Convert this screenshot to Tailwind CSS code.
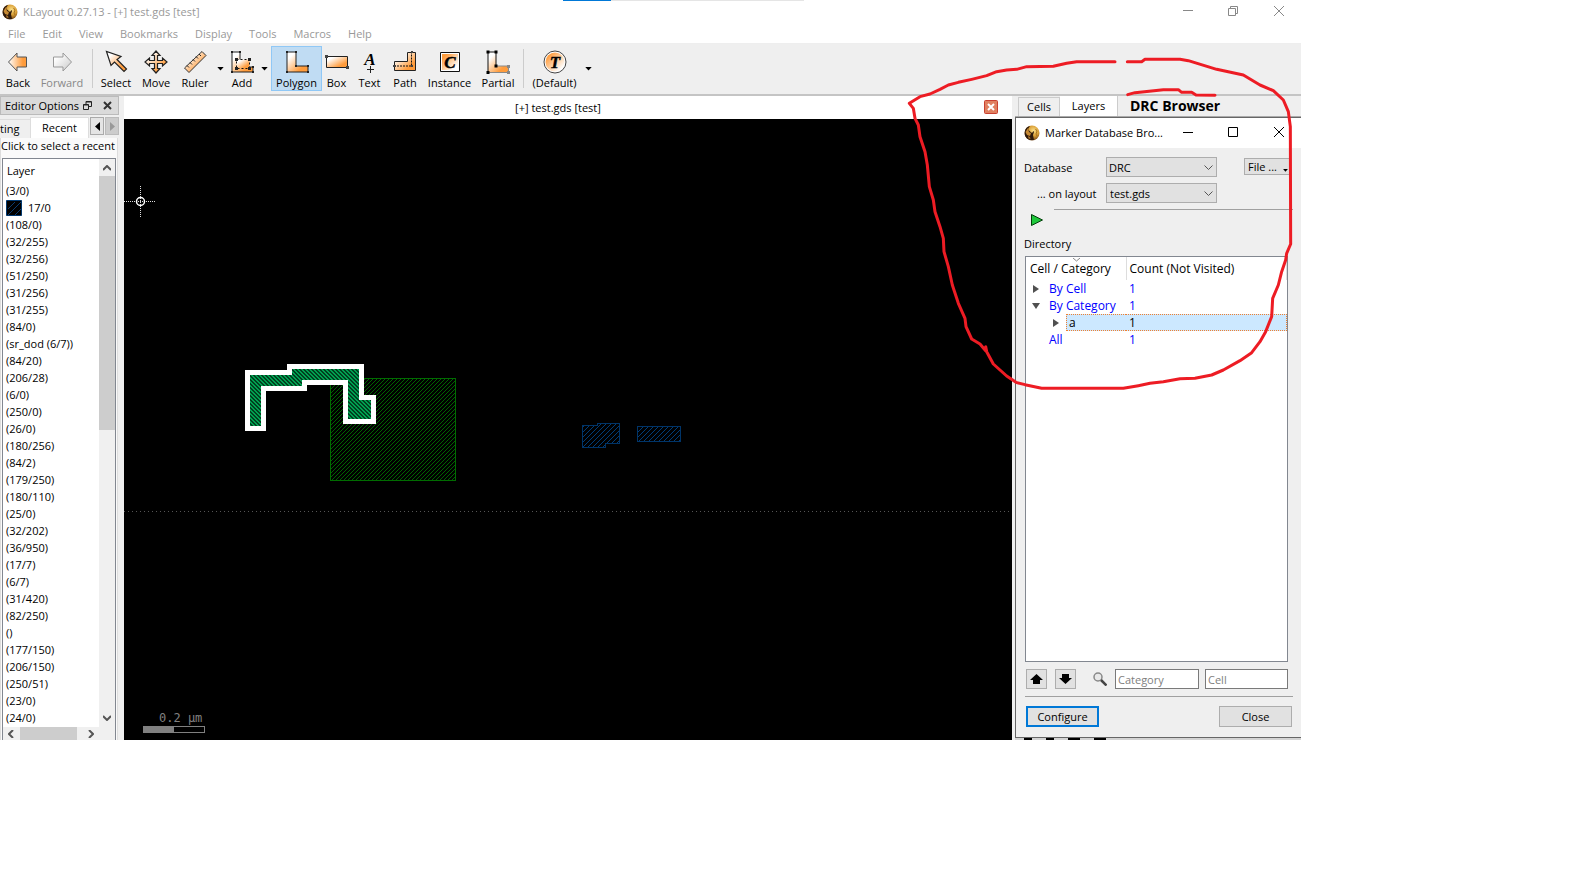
<!DOCTYPE html>
<html lang="en">
<head>
<meta charset="utf-8">
<title>KLayout 0.27.13 - [+] test.gds [test]</title>
<script src="https://cdn.jsdelivr.net/npm/@tailwindcss/browser@4"></script>
</head>
<body class="h-screen overflow-hidden bg-white pr-[273px] pb-[156px] font-['Open_Sans','Noto_Sans',sans-serif] text-[11px] leading-4 text-black">
<svg class="absolute size-0" aria-hidden="true">
  <defs>
    <linearGradient id="or" x1="0" y1="0" x2="1" y2="1"><stop offset="0.2" stop-color="#fff"/><stop offset="0.75" stop-color="#ff9c3c"/></linearGradient>
    <linearGradient id="ro" x1="1" y1="1" x2="0" y2="0"><stop offset="0.15" stop-color="#fff"/><stop offset="0.85" stop-color="#ff9c3c"/></linearGradient>
    <linearGradient id="oh"><stop offset="0" stop-color="#fff"/><stop offset="0.8" stop-color="#ff9c3c"/></linearGradient>
    <linearGradient id="gr" x1="0" y1="0" x2="1" y2="1"><stop offset="0.2" stop-color="#fff"/><stop offset="1" stop-color="#c8c8c8"/></linearGradient>
    <radialGradient id="gold" cx="0.6" cy="0.35" r="0.7"><stop offset="0" stop-color="#fbe08a"/><stop offset="0.5" stop-color="#d99e35"/><stop offset="1" stop-color="#5c3210"/></radialGradient>
    <symbol id="logo" viewBox="0 0 16 16">
      <circle cx="8" cy="8" r="7.5" fill="url(#gold)"/>
      <path d="M.800 7C1 4 3 1.500 6 1L4 4l1.500 2L8 8l1.500-2 .5 1-1 3 1 5C5 15.500 1.500 13 .800 9.500z" fill="#2e1a0c"/>
      <path d="M1.500 7l2.500-4 1 4 2 1-1 3-3-1z" fill="#c78a34"/>
      <path d="M4 11l2 1 .5 2-2-.5z" fill="#a87028"/>
      <path d="M11.500 4l1.500 2-1 3 1 2" fill="none" stroke="#a8741f"/>
    </symbol>
    <symbol id="drop" viewBox="0 0 8 5"><path d="M0 0h8L4 4.500z"/></symbol>
  </defs>
</svg>

<div class="relative flex h-full flex-col overflow-hidden">
  <div class="absolute left-[563px] top-0 flex h-px w-[241px] bg-[#e5e5e5]"><span class="w-12 bg-[#0078d7]"></span></div>

  <header class="flex h-6 shrink-0 items-center pl-[2px] pr-[17px] text-[#999]">
    <svg class="mr-[5px] size-4"><use href="#logo"/></svg>
    <h1 class="flex-1">KLayout 0.27.13 - [+] test.gds [test]</h1>
    <div class="flex gap-[33px]">
      <button class="size-3" aria-label="Minimize"><svg class="size-3" viewBox="0 0 12 12" stroke="#888"><path d="M1 4.500h10"/></svg></button>
      <button class="size-3" aria-label="Restore"><svg class="size-3" viewBox="0 0 12 12" fill="none" stroke="#888"><path d="M1.500 2.500h7v7h-7zM3.500 2.500v-2h7v7h-2"/></svg></button>
      <button class="size-3" aria-label="Close"><svg class="size-3" viewBox="0 0 12 12" stroke="#888"><path d="M2 0l10 10M12 0L2 10"/></svg></button>
    </div>
  </header>

  <nav class="flex h-5 shrink-0 items-center gap-px border-b border-[#eee] text-[#999]">
    <button class="px-2">File</button><button class="px-2">Edit</button><button class="px-2">View</button><button class="px-2">Bookmarks</button><button class="px-2">Display</button><button class="px-2">Tools</button><button class="px-2">Macros</button><button class="px-2">Help</button>
  </nav>

  <div class="flex h-[52px] shrink-0 border-b-2 border-[#c4c4c4] bg-[#efefef] pb-[3px] pt-[2px]" role="toolbar">
    <button class="flex w-9 flex-col items-center justify-end gap-px"><svg class="size-6" viewBox="0 0 24 24"><path d="M2.500 12L11 3v4h9.500v10H11v4z" fill="url(#oh)" stroke="#555"/></svg><span>Back</span></button>
    <button class="flex w-[52px] flex-col items-center justify-end gap-px text-[#888]"><svg class="size-6" viewBox="0 0 24 24"><path d="M21.500 12L13 3v4H3.500v10H13v4z" fill="url(#gr)" stroke="#999"/></svg><span>Forward</span></button>
    <span class="mx-1 my-[3px] w-px bg-[#ccc]"></span>
    <button class="flex w-[38px] flex-col items-center justify-end gap-px"><svg class="size-6" viewBox="0 0 24 24"><path d="M2.500 1.500l4.500 14 3.500-3.500 9.500 9.500 2.500-2.500-9.500-9.500 4-3z" fill="url(#or)" stroke="#222" stroke-width="1.200"/></svg><span>Select</span></button>
    <button class="flex w-[42px] flex-col items-center justify-end gap-px"><svg class="size-6" viewBox="0 0 24 24"><path d="M12 1l4 4.500h-2.500v5h5V8l4.500 4-4.500 4v-2.500h-5v5H16L12 23l-4-4.500h2.500v-5h-5V16L1 12l4.500-4v2.500h5v-5H8z" fill="url(#or)" stroke="#222" stroke-width="1.200"/></svg><span>Move</span></button>
    <button class="flex w-[36px] flex-col items-center justify-end gap-px"><svg class="size-6" viewBox="0 0 24 24"><path d="M19 1.500l4 4L6 22.500l-4.500-4.500z" fill="url(#or)" stroke="#333"/><path d="M4 15.500l2 2M7 12.500l2 2M10 9.500l2 2M13 6.500l2 2M16 4l2 2" stroke="#222"/></svg><span>Ruler</span></button>
    <button class="flex w-[14px] items-center justify-center" aria-label="Ruler types"><svg class="h-1 w-[7px]"><use href="#drop"/></svg></button>
    <button class="flex w-[30px] flex-col items-center justify-end gap-px"><svg class="size-6" viewBox="0 0 24 24"><path d="M2 2h8v15h13v5H2z" fill="url(#or)" stroke="#222"/><path d="M6.500 9.500h13v9h-13z" fill="url(#or)" stroke="#111" stroke-dasharray="2 2"/><path d="M1 1h2v2H1zM9 1h2v2H9zM1 21h2v2H1zM22 21h2v2h-2zM22 16h2v2h-2zM5 8h3v3H5zM18 8h3v3h-3zM5 17h3v3H5zM18 17h3v3h-3z" fill="#222"/></svg><span>Add</span></button>
    <button class="flex w-[14px] items-center justify-center" aria-label="Add modes"><svg class="h-1 w-[7px]"><use href="#drop"/></svg></button>
    <button class="flex w-[51px] flex-col items-center justify-end gap-px bg-[#c0dcf3] inset-ring inset-ring-[#90c8f6]" aria-pressed="true"><svg class="size-6" viewBox="0 0 24 24"><path d="M2 2h9v14h12v6H2z" fill="url(#or)" stroke="#222"/><path d="M1 1h2v2H1zM10 1h2v2h-2zM10 15h2v2h-2zM22 15h2v2h-2zM1 21h2v2H1zM22 21h2v2h-2z" fill="#222"/></svg><span>Polygon</span></button>
    <button class="flex w-[29px] flex-col items-center justify-end gap-px"><svg class="size-6" viewBox="0 0 24 24"><path d="M1.500 6.500h21v11h-21z" fill="url(#or)" stroke="#222"/><path d="M0 5h3v3H0zM21 16h3v3h-3z" fill="#444"/></svg><span>Box</span></button>
    <button class="flex w-[37px] flex-col items-center justify-end gap-px"><svg class="size-6 font-['Liberation_Serif',serif]" viewBox="0 0 24 24"><text x="12" y="15" text-anchor="middle" font-size="17" font-weight="bold" font-style="italic">A</text><path d="M12.500 16v7M9 19.500h7" stroke="#222"/></svg><span>Text</span></button>
    <button class="flex w-[34px] flex-col items-center justify-end gap-px"><svg class="size-6" viewBox="0 0 24 24"><path d="M14.500 2.500h8v18h-21v-9h13z" fill="url(#or)" stroke="#222"/><path d="M18.500 1.500V16H1" fill="none" stroke="#111" stroke-dasharray="2 1"/><path d="M18 1h2v2h-2zM18 15h2v2h-2zM0 15h3v2H0z" fill="#444"/></svg><span>Path</span></button>
    <button class="flex w-[55px] flex-col items-center justify-end gap-px"><svg class="size-6 font-['Liberation_Serif',serif]" viewBox="0 0 24 24"><path d="M2.500 2.500h19v19h-19z" fill="#fff" stroke="#111"/><path d="M4 4h16v16H4z" fill="url(#ro)"/><text x="12" y="18" text-anchor="middle" font-size="17" font-weight="bold" font-style="italic" stroke="#000" stroke-width=".5">C</text></svg><span>Instance</span></button>
    <button class="flex w-[42px] flex-col items-center justify-end gap-px"><svg class="size-6" viewBox="0 0 24 24"><path d="M2 2h8v14h13v6H2z" fill="url(#or)"/><path d="M10 16h12.500v6.500H2" fill="none" stroke="#888"/><path d="M2 22V2h8v14" fill="none" stroke="#111"/><path d="M.500.500h3v3h-3zM8.500.500h3v3h-3zM8.500 14.500h3v3h-3zM.500 21h3v3h-3z"/><path d="M21 15h3v3h-3zM21 21h3v3h-3z" fill="#888"/></svg><span>Partial</span></button>
    <span class="mx-1 my-[3px] w-px bg-[#ccc]"></span>
    <button class="flex w-[53px] flex-col items-center justify-end gap-px"><svg class="size-6 font-['Liberation_Serif',serif]" viewBox="0 0 24 24"><circle cx="12" cy="12" r="11" fill="#fff" stroke="#444"/><circle cx="12" cy="12" r="9.500" fill="url(#ro)"/><text x="12" y="18" text-anchor="middle" font-size="17" font-weight="bold" font-style="italic" stroke="#000" stroke-width=".4">T</text></svg><span>(Default)</span></button>
    <button class="flex w-[14px] items-center justify-center" aria-label="Default modes"><svg class="h-1 w-[7px]"><use href="#drop"/></svg></button>
  </div>

  <main class="flex min-h-0 flex-1 bg-[#efefef]">
    <aside class="flex w-[124px] shrink-0 flex-col pr-[5px]">
      <div class="flex h-[19px] shrink-0 items-center border border-[#bbb] bg-[#dadada] pl-1 pr-[6px]">
        <h2 class="w-[78px] whitespace-nowrap">Editor Options</h2>
        <button aria-label="Float"><svg class="size-[9px]" viewBox="0 0 9 9" fill="none" stroke="#222"><path d="M.500 3.500h5v5h-5zM.500 4h5M3 3.500v-3h5.500v5H6M3 1h5"/></svg></button>
        <button class="ml-auto" aria-label="Close panel"><svg class="size-[9px]" viewBox="0 0 9 9" stroke="#333" stroke-width="2"><path d="M1 1l7 7M8 1L1 8"/></svg></button>
      </div>
      <div class="mt-[2px] flex h-[21px] shrink-0 items-end">
        <button class="h-[19px] w-[30px] shrink-0 border-t border-[#ddd] text-left">ting</button>
        <button class="h-[21px] w-[59px] shrink-0 border-x border-t border-[#ddd] bg-white">Recent</button>
        <button class="mb-[3px] ml-px flex h-[18px] w-[14px] items-center justify-center border border-[#aaa] bg-[#e4e4e4]" aria-label="Scroll tabs left"><svg class="h-[9px] w-[5px]" viewBox="0 0 5 9"><path d="M5 0v9L0 4.500z"/></svg></button>
        <button class="mb-[3px] ml-px flex h-[18px] w-[14px] items-center justify-center border border-[#bbb] bg-[#ccc]" aria-label="Scroll tabs right"><svg class="h-[9px] w-[5px]" viewBox="0 0 5 9"><path d="M0 0v9l5-4.500z" fill="#999"/></svg></button>
      </div>
      <div class="mr-[1px] flex min-h-0 flex-1 flex-col border-x border-[#ddd] bg-[#fafafa] pr-px">
        <p class="h-5 shrink-0 whitespace-nowrap">Click to select a recent</p>
        <div class="ml-px flex min-h-0 flex-1 border border-b-0 border-[#828790] bg-white">
          <div class="flex min-w-0 flex-1 flex-col">
            <h3 class="h-[23px] shrink-0 pl-1 pt-1">Layer</h3>
            <ul class="min-h-0 flex-1 overflow-hidden whitespace-nowrap pl-[3px] leading-[17px]">
              <li>(3/0)</li>
              <li class="flex items-center gap-[6px]"><svg class="size-4" viewBox="0 0 16 16"><path d="M.500.500h15v15H.500z" stroke="#00376e"/><path d="M2 9l7-7M2 15L15 2M9 15l6-6" stroke="#0b3c70"/></svg>17/0</li>
              <li>(108/0)</li><li>(32/255)</li><li>(32/256)</li><li>(51/250)</li><li>(31/256)</li><li>(31/255)</li><li>(84/0)</li><li>(sr_dod (6/7))</li><li>(84/20)</li><li>(206/28)</li><li>(6/0)</li><li>(250/0)</li><li>(26/0)</li><li>(180/256)</li><li>(84/2)</li><li>(179/250)</li><li>(180/110)</li><li>(25/0)</li><li>(32/202)</li><li>(36/950)</li><li>(17/7)</li><li>(6/7)</li><li>(31/420)</li><li>(82/250)</li><li>()</li><li>(177/150)</li><li>(206/150)</li><li>(250/51)</li><li>(23/0)</li><li>(24/0)</li>
            </ul>
            <div class="flex h-[13px] shrink-0 items-center justify-between bg-[#f0f0f0] px-[5px]">
              <svg class="h-2 w-[6px]" viewBox="0 0 6 8" fill="none" stroke="#555" stroke-width="2"><path d="M5 0L1 4l4 4"/></svg>
              <span class="mr-[5px] h-full w-[57px] bg-[#cdcdcd]"></span>
              <svg class="h-2 w-[6px]" viewBox="0 0 6 8" fill="none" stroke="#555" stroke-width="2"><path d="M1 0l4 4-4 4"/></svg>
            </div>
          </div>
          <div class="flex w-4 shrink-0 flex-col items-center bg-[#f0f0f0] pb-[19px] pt-[6px]">
            <svg class="h-[6px] w-2 shrink-0" viewBox="0 0 8 6" fill="none" stroke="#555" stroke-width="2"><path d="M0 5l4-4 4 4"/></svg>
            <span class="mt-[5px] h-[254px] w-full bg-[#cdcdcd]"></span>
            <svg class="mt-auto h-[6px] w-2 shrink-0" viewBox="0 0 8 6" fill="none" stroke="#555" stroke-width="2"><path d="M0 1l4 4 4-4"/></svg>
          </div>
        </div>
      </div>
    </aside>

    <section class="flex min-w-0 flex-1 flex-col">
      <div class="flex h-[23px] shrink-0 items-center bg-white pr-[14px]">
        <span class="flex-1 pl-2 text-center">[+] test.gds [test]</span>
        <button class="mb-px" aria-label="Close view"><svg class="size-[14px]" viewBox="0 0 14 14"><rect x=".5" y=".5" width="13" height="13" rx="1" fill="#e08060" stroke="#c84030"/><path d="M4 4l6 6M10 4l-6 6" stroke="#fff" stroke-width="2"/></svg></button>
      </div>
      <div class="min-h-0 flex-1 overflow-hidden bg-black">
        <!-- Layout canvas, in window coordinates -->
        <svg class="h-[622px] w-full" viewBox="124 119 888 622" preserveAspectRatio="xMinYMin slice" shape-rendering="crispEdges">
          <defs>
            <pattern id="g" width="4" height="4" patternUnits="userSpaceOnUse"><path d="M0 3h1v1H0zM1 2h1v1H1zM2 1h1v1H2zM3 0h1v1H3z" fill="#006400"/></pattern>
            <pattern id="t" width="4" height="4" patternUnits="userSpaceOnUse"><path d="M0 0h2v1H0zM1 1h2v1H1zM2 2h2v1H2zM3 3h1v1H3zM0 3h1v1H0z" fill="#00a050"/></pattern>
            <pattern id="b" width="5" height="5" patternUnits="userSpaceOnUse"><path d="M0 4h1v1H0zM1 3h1v1H1zM2 2h1v1H2zM3 1h1v1H3zM4 0h1v1H4z" fill="#003c78"/></pattern>
          </defs>
          <path d="M124 511.500h888" stroke="#555" stroke-dasharray="1 3"/>
          <path d="M330.500 378.500h125v102h-125z" fill="url(#g)" stroke="#006c00"/>
          <path d="M247.500 372.500H289v-6h72V397h12.500v24.500h-28V382H304v6h-41v40h-15.500z" fill="#00401f" stroke="none"/>
          <path d="M247.500 372.500H289v-6h72V397h12.500v24.500h-28V382H304v6h-41v40h-15.500z" fill="url(#t)" stroke="#fff" stroke-width="5"/>
          <path d="M582.500 425.500h15v-2h22v20h-14v4h-23z" fill="url(#b)" stroke="#003468"/>
          <path d="M637.500 426.500h43v15h-43z" fill="url(#b)" stroke="#003468"/>
          <path d="M124 201.500h32M140.500 186v31" stroke="#ddd" stroke-dasharray="1 1"/>
          <circle cx="140.500" cy="201.500" r="4" fill="none" stroke="#fff" stroke-width="1.500" shape-rendering="auto"/>
          <text x="159" y="722" font-size="12" fill="#808080" class="font-['DejaVu_Sans_Mono',monospace]">0.2 µm</text>
          <path d="M143.500 726.500h61v6h-61z" fill="none" stroke="#808080"/><path d="M143 726h31v7h-31z" fill="#808080"/>
        </svg>
      </div>
    </section>

    <aside class="flex w-[289px] shrink-0 flex-col overflow-hidden pl-[3px]">
      <div class="flex h-[21px] shrink-0 items-end border-b border-[#aaa] pl-[3px]">
        <button class="h-[19px] w-[42px] border border-b-0 border-[#ccc]">Cells</button>
        <button class="h-5 w-[58px] border-r border-[#ccc] bg-white">Layers</button>
        <button class="pl-3 pb-[2px] text-[14px] font-bold leading-4">DRC Browser</button>
      </div>
      <div class="flex min-h-0 flex-1 flex-col border-y border-l border-[#666]" role="dialog" aria-label="Marker Database Browser">
        <div class="flex h-[30px] shrink-0 items-center bg-white pl-2 pr-4">
          <svg class="mr-[5px] size-4"><use href="#logo"/></svg>
          <h2 class="flex-1 whitespace-nowrap">Marker Database Bro...</h2>
          <div class="flex gap-[33px]">
            <button class="size-3" aria-label="Minimize browser"><svg class="size-3" viewBox="0 0 12 12" stroke="#000"><path d="M0 5.500h10"/></svg></button>
            <button class="size-3" aria-label="Maximize browser"><svg class="size-3" viewBox="0 0 12 12" fill="none" stroke="#000"><path d="M.500.500h9v9h-9z"/></svg></button>
            <button class="size-3" aria-label="Close browser"><svg class="size-3" viewBox="0 0 12 12" stroke="#000"><path d="M1 0l10 10M11 0L1 10"/></svg></button>
          </div>
        </div>
        <div class="flex min-h-0 flex-1 flex-col pl-2 pr-2">
          <div class="flex shrink-0 justify-between pt-[9px]">
            <div class="grid grid-cols-[82px_111px] items-center gap-y-[6px]">
              <label for="db" class="pt-px">Database</label>
              <span class="grid items-center"><select id="db" class="col-start-1 row-start-1 h-5 appearance-none border border-[#adadad] bg-[#e1e1e1] pl-[2px] pt-px"><option>DRC</option></select><svg class="pointer-events-none col-start-1 row-start-1 mr-1 h-[5px] w-[9px] justify-self-end" viewBox="0 0 9 5" fill="none" stroke="#555"><path d="M.500.500l4 4 4-4"/></svg></span>
              <label for="lay" class="pl-[13px] pt-px">... on layout</label>
              <span class="grid items-center"><select id="lay" class="col-start-1 row-start-1 h-5 appearance-none border border-[#adadad] bg-[#e1e1e1] pl-[3px] pt-px"><option>test.gds</option></select><svg class="pointer-events-none col-start-1 row-start-1 mr-1 h-[5px] w-[9px] justify-self-end" viewBox="0 0 9 5" fill="none" stroke="#555"><path d="M.500.500l4 4 4-4"/></svg></span>
            </div>
            <button class="mr-[3px] mt-px flex h-[17px] w-[46px] items-center gap-[6px] border border-[#adadad] bg-[#e1e1e1] pl-[3px]"><span>File ...</span><svg class="mt-2 h-[3px] w-[5px] shrink-0"><use href="#drop"/></svg></button>
          </div>
          <hr class="ml-[30px] mt-[6px] shrink-0 border-t border-[#a0a0a0]">
          <button class="ml-[7px] mt-1 size-3 shrink-0" aria-label="Run"><svg class="size-3" viewBox="0 0 12 12"><path d="M.500.500l11 5.500-11 5.500z" fill="#1fc83c" stroke="#033c0a"/></svg></button>
          <h3 class="mt-[10px] shrink-0">Directory</h3>
          <div class="ml-px mr-[5px] mt-[4px] min-h-0 flex-1 border border-[#828790] bg-white text-[12px]">
            <table class="w-full table-fixed border-collapse text-left">
              <colgroup><col class="w-[100px]"><col></colgroup>
              <thead><tr class="h-[23px]">
                <th class="relative border-r border-[#ddd] pl-1 font-normal"><svg class="absolute left-[47px] top-px h-1 w-[7px]" viewBox="0 0 7 4" fill="none" stroke="#888"><path d="M0 0l3.500 3L7 0"/></svg>Cell / Category</th>
                <th class="border-r border-[#ddd] pl-[3px] font-normal">Count (Not Visited)</th>
              </tr></thead>
              <tbody class="text-[#0000ff]">
                <tr class="h-[17px]"><td class="p-0"><div class="flex items-center gap-[10px] pl-[7px]"><svg class="h-2 w-[6px]" viewBox="0 0 6 8"><path d="M0 0v8l6-4z" fill="#505050"/></svg>By Cell</div></td><td class="p-0 pl-[3px]">1</td></tr>
                <tr class="h-[17px]"><td class="p-0"><div class="flex items-center gap-[9px] whitespace-nowrap pl-[6px]"><svg class="h-[6px] w-2" viewBox="0 0 8 6"><path d="M0 0h8L4 6z" fill="#505050"/></svg>By Category</div></td><td class="p-0 pl-[3px]">1</td></tr>
                <tr class="h-[17px] text-black"><td class="p-0"><div class="flex items-center gap-[7px] pl-[27px]"><svg class="h-2 w-[6px]" viewBox="0 0 6 8"><path d="M0 0v8l6-4z" fill="#505050"/></svg><span class="h-[17px] flex-1 border border-r-0 border-dotted border-[#f08030] bg-[#cce8ff] pl-[2px] leading-[15px]">a</span></div></td><td class="p-0"><div class="h-[17px] border border-l-0 border-dotted border-[#f08030] bg-[#cce8ff] pl-[3px] leading-[15px]">1</div></td></tr>
                <tr class="h-[17px]"><td class="p-0 pl-[23px]">All</td><td class="p-0 pl-[3px]">1</td></tr>
              </tbody>
            </table>
          </div>
          <div class="ml-[2px] mr-[5px] mt-[7px] flex h-5 shrink-0 items-stretch">
            <button class="flex w-[21px] items-center justify-center border border-[#adadad] bg-[#e1e1e1]" aria-label="Previous"><svg class="h-[10px] w-[13px]" viewBox="0 0 13 10"><path d="M6.500 0L13 6h-3v4H3V6H0z"/></svg></button>
            <button class="ml-2 flex w-[21px] items-center justify-center border border-[#adadad] bg-[#e1e1e1]" aria-label="Next"><svg class="h-[10px] w-[13px]" viewBox="0 0 13 10"><path d="M6.500 10L0 4h3V0h7v4h3z"/></svg></button>
            <svg class="ml-[17px] mr-2 mt-[3px] size-[14px]" viewBox="0 0 14 14"><circle cx="5" cy="5" r="4" fill="#e8e8e8" stroke="#888" stroke-width="1.500"/><path d="M8 8l5.500 5.500" stroke="#444" stroke-width="2.500"/></svg>
            <input class="w-[84px] min-w-0 border border-[#7a7a7a] bg-white pl-[2px] pt-px placeholder:text-[#808080]" aria-label="Category" placeholder="Category">
            <input class="ml-[6px] w-0 flex-1 border border-[#7a7a7a] bg-white pl-[2px] pt-px placeholder:text-[#808080]" aria-label="Cell" placeholder="Cell">
          </div>
          <hr class="ml-px mt-[7px] shrink-0 border-t border-[#a0a0a0]">
          <div class="mb-[10px] ml-[2px] mr-px mt-[9px] flex shrink-0 justify-between">
            <button class="h-[21px] w-[73px] border-2 border-[#0078d7] bg-[#e1e1e1] leading-4">Configure</button>
            <button class="h-[21px] w-[73px] border border-[#adadad] bg-[#e1e1e1] leading-4">Close</button>
          </div>
        </div>
      </div>
      <div class="flex h-[2px] shrink-0 items-start gap-[14px] bg-[#d4d4d4] pl-[9px]">
        <span class="h-[2px] w-2 bg-black"></span><span class="h-[2px] w-2 bg-black"></span><span class="h-[2px] w-3 bg-black"></span><span class="h-[2px] w-3 bg-black"></span>
      </div>
    </aside>
  </main>

  <!-- Freehand red marker over the browser window -->
  <svg class="pointer-events-none absolute right-0 top-[40px] h-[360px] w-[411px]" viewBox="0 0 1233 1080" fill="none" stroke="#ed1c24" stroke-width="9" stroke-linecap="round" stroke-linejoin="round">
    <path d="M675 65H560L530 70 490 79 410 80 380 88 350 90 320 95 290 107 245 118 205 127 175 135 150 148 120 162 90 170 58 190 70 205 75 235 85 255 90 290 105 335 112 375 118 440 130 480 135 515 150 560 160 595 162 635 175 680 187 735 205 790 225 835 228 860 245 897 270 912 287 932V920L290 935 310 972 350 1008 378 1027 405 1034 455 1045H700L745 1037 780 1030 820 1025 870 1016 915 1015 965 1005 1000 990 1050 962 1085 938 1110 905 1127 875 1145 830 1148 775 1165 735 1175 695 1187 660 1190 640 1202 612 1201 260 1195 215 1180 180 1150 152 1110 135 1060 105 980 88 895 62 870 58H765L755 65H712"/>
    <path d="M713 164L735 158 820 149H865L875 157H905L918 165 975 166"/>
  </svg>
</div>
</body>
</html>
